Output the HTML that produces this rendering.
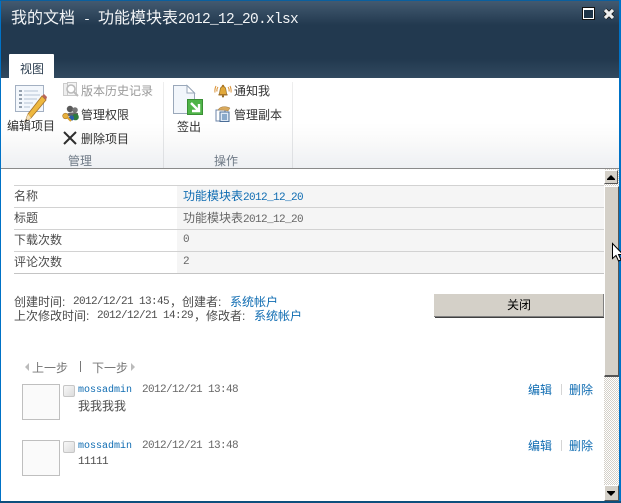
<!DOCTYPE html>
<html><head><meta charset="utf-8"><style>
html,body{margin:0;padding:0;width:621px;height:503px;overflow:hidden;background:#fff}
#p{position:relative;width:621px;height:503px;overflow:hidden;background:#fff;font-family:"Liberation Sans","WenQuanYi Zen Hei","Noto Sans CJK SC",sans-serif;font-size:12px;color:#4c4c4c}
.b{position:absolute}
.t{position:absolute;white-space:nowrap;line-height:14px;height:14px;margin-top:1px}
.m{font-family:"Liberation Mono",monospace;font-size:11px;letter-spacing:-.6px}
.l{color:#0f6cb2}
.r{color:#222}
.line{position:absolute;left:14px;width:590px;height:1px;background:#d2d2d2}
svg{position:absolute;overflow:visible}
</style></head><body><div id="p">
<div class="b" style="left:1px;top:1px;width:618px;height:77px;background:linear-gradient(#435a70 0,#22394f 24px,#22394f 58px,#31495f 77px)"></div>
<div class="t" style="left:11px;top:9px;color:#f2f4f6;font-size:16px;line-height:18px;height:18px">我的文档<span style="font-family:'Liberation Mono',monospace;font-size:13.33px"> - </span><span style="margin-left:-1px">功能模块表</span><span style="font-family:'Liberation Mono',monospace;font-size:14.5px;letter-spacing:-.7px">2012_12_20.xlsx</span></div>
<div class="b" style="left:583px;top:8px;width:9px;height:8px;border:1px solid #fff;background:#1c3347;outline:1px solid #111;outline-offset:0;border-top-width:2px"></div>
<svg style="left:604px;top:9px" width="10" height="10" viewBox="0 0 10 10"><path d="M1 1L9 9M9 1L1 9" stroke="#111" stroke-width="4.6"/><path d="M1 1L9 9M9 1L1 9" stroke="#eee" stroke-width="3.2"/></svg>
<div class="b" style="left:9px;top:54px;width:45px;height:25px;background:linear-gradient(#fff,#fff);border-radius:1px 1px 0 0"></div>
<div class="t" style="left:20px;top:61px;color:#2c3e50">视图</div>

<div class="b" style="left:1px;top:78px;width:618px;height:90px;background:linear-gradient(#fff 0,#fff 45px,#fafafa 62px,#eef0f3 90px)"></div>
<div class="b" style="left:163px;top:82px;width:1px;height:86px;background:linear-gradient(#eee,#dcdee1)"></div>
<div class="b" style="left:292px;top:82px;width:1px;height:86px;background:linear-gradient(#eee,#dcdee1)"></div>
<div class="b" style="left:1px;top:168px;width:618px;height:1px;background:#8a8a8a"></div>

<svg style="left:14px;top:84px" width="36" height="40" viewBox="0 0 36 40">
<rect x="1.500" y="1.500" width="28" height="26" fill="#f3f7fc" stroke="#a3b0c2"/>
<path d="M5 7h3M5 11h3M5 15h3M5 19h3M5 23h3" stroke="#5b6b80" stroke-width="1.200"/>
<path d="M10 7h14M10 11h16M10 15h13M10 19h9M10 23h6" stroke="#c2cddb" stroke-width="1.200"/>
<path d="M11 38l3-8L28 12l4 4L17 34z" fill="#eeb83f" stroke="#a5722a" stroke-width=".8"/>
<path d="M28 12l2-2 3 3-1 3z" fill="#b8665a"/>
<path d="M11 38l3-8 3 4z" fill="#f3dfb5"/>
<path d="M11 38l1.200-3 1.600 1.800z" fill="#333"/>
</svg>
<div class="t r" style="left:7px;top:118px;color:#333">编辑项目</div>

<svg style="left:62px;top:81px" width="18" height="18" viewBox="0 0 18 18"><rect x="1.500" y="2.500" width="9" height="12" fill="#eee" stroke="#ccc"/><rect x="5.500" y="1.500" width="9" height="13" fill="#f4f4f4" stroke="#c8c8c8"/><circle cx="9" cy="8" r="4" fill="#fff" stroke="#bbb" stroke-width="1.600"/><path d="M12 11l4 4" stroke="#bbb" stroke-width="2"/></svg>
<div class="t" style="left:81px;top:83px;color:#9a9a9a">版本历史记录</div>
<svg style="left:62px;top:105px" width="18" height="18" viewBox="0 0 18 18"><circle cx="8" cy="4" r="3.200" fill="#5a5a5a"/><circle cx="13" cy="5" r="2.800" fill="#777"/><path d="M4 11c0-4 8-4 12-3v3z" fill="#666"/><circle cx="13.500" cy="12" r="3.300" fill="#2f7b3d"/><circle cx="9.500" cy="13" r="2.600" fill="#2b5fa8"/><circle cx="3.500" cy="11" r="2.800" fill="#e8b13e" stroke="#a9792a" stroke-width=".6"/><path d="M5 12l4 4" stroke="#d99f2e" stroke-width="2"/></svg>
<div class="t r" style="left:81px;top:107px;color:#333">管理权限</div>
<svg style="left:63px;top:131px" width="14" height="14" viewBox="0 0 14 14"><path d="M1 1L13 13M13 1L1 13" stroke="#2e2e2e" stroke-width="2"/></svg>
<div class="t r" style="left:81px;top:131px;color:#333">删除项目</div>
<div class="t" style="left:68px;top:153px;color:#6f7a86">管理</div>

<svg style="left:172px;top:84px" width="34" height="40" viewBox="0 0 34 40">
<path d="M1.500 1.500H15L22.500 9V29.500H1.500z" fill="#f2f6fb" stroke="#9aa8ba"/>
<path d="M15 1.500V9H22.500z" fill="#fff" stroke="#9aa8ba"/>
<rect x="15.500" y="15.500" width="15" height="15" fill="#4fb448" stroke="#3a8f35"/>
<path d="M19 19l8 8M27 20v7h-7" stroke="#fff" stroke-width="2.400" fill="none"/>
</svg>
<div class="t r" style="left:177px;top:119px;color:#333">签出</div>
<svg style="left:215px;top:83px" width="16" height="15" viewBox="0 0 16 15"><path d="M4 11.500c1.500-2 0-8 4-8s2.500 6 4 8z" fill="#e2a93a" stroke="#8f6a25" stroke-width=".7"/><circle cx="8" cy="3" r="1.200" fill="#b07a28"/><rect x="3.500" y="11" width="9" height="1.500" fill="#a87428"/><circle cx="8" cy="13.400" r="1.100" fill="#8f6a25"/><path d="M3 4Q1.500 6 2 8.500M1 3Q-.5 6 0 9.500M13 4Q14.500 6 14 8.500M15 3Q16.500 6 16 9.500" fill="none" stroke="#d98f30"/></svg>
<div class="t r" style="left:234px;top:83px;color:#333">通知我</div>
<svg style="left:215px;top:106px" width="16" height="16" viewBox="0 0 16 16"><rect x="1" y="4" width="9" height="11" fill="#fff" stroke="#6c86a8"/><rect x="5" y="6" width="9" height="9.500" fill="#dfeaf6" stroke="#4a6c96"/><path d="M7 9h5M7 11h5M7 13h5" stroke="#356aa0"/><path d="M3 4c2-4 8-4 12-2l-2 3c-3-1-6-1-10-1z" fill="#d9a95c" stroke="#9c7a45" stroke-width=".5"/></svg>
<div class="t r" style="left:234px;top:107px;color:#333">管理副本</div>
<div class="t" style="left:214px;top:153px;color:#6f7a86">操作</div>

<div class="b" style="left:177px;top:185px;width:427px;height:88px;background:#f5f5f5"></div>
<div class="line" style="top:185px"></div><div class="line" style="top:207px"></div><div class="line" style="top:229px"></div><div class="line" style="top:251px"></div><div class="line" style="top:273px;background:#c4c4c4"></div>
<div class="t" style="left:14px;top:188px">名称</div>
<div class="t" style="left:14px;top:210px">标题</div>
<div class="t" style="left:14px;top:232px">下载次数</div>
<div class="t" style="left:14px;top:254px">评论次数</div>
<div class="t l" style="left:183px;top:188px">功能模块表<span class="m">2012_12_20</span></div>
<div class="t" style="left:183px;top:210px;color:#666">功能模块表<span class="m">2012_12_20</span></div>
<div class="t m" style="left:183px;top:232px;color:#666">0</div>
<div class="t m" style="left:183px;top:254px;color:#666">2</div>

<div class="t" style="left:14px;top:294px">创建时间:</div><div class="t m" style="left:73px;top:294px">2012/12/21 13:45</div><div class="t" style="left:170px;top:294px">，创建者:</div><div class="t l" style="left:230px;top:294px">系统帐户</div>
<div class="t" style="left:14px;top:308px">上次修改时间:</div><div class="t m" style="left:97px;top:308px">2012/12/21 14:29</div><div class="t" style="left:194px;top:308px">，修改者:</div><div class="t l" style="left:254px;top:308px">系统帐户</div>

<div class="b" style="left:434px;top:294px;width:169px;height:22px;background:#d4d0c8;border-right:1px solid #808080;border-bottom:1px solid #808080;box-shadow:1px 1px 0 #404040"></div>
<div class="t" style="left:507px;top:297px;color:#000">关闭</div>

<svg style="left:25px;top:363px" width="5" height="8"><path d="M4 0V8L0 4z" fill="#bbb"/></svg>
<div class="t" style="left:32px;top:360px;color:#777">上一步</div>
<div class="b" style="left:80px;top:361px;width:1px;height:11px;background:#777"></div>
<div class="t" style="left:92px;top:360px;color:#777">下一步</div>
<svg style="left:131px;top:363px" width="5" height="8"><path d="M0 0V8L4 4z" fill="#bbb"/></svg>

<div class="b" style="left:22px;top:384px;width:36px;height:34px;background:#fafafa;border:1px solid #bfbfbf"></div>
<div class="b" style="left:63px;top:385px;width:10px;height:10px;background:linear-gradient(135deg,#f8f8f8,#dcdcdc);border:1px solid #c6c6c6;border-radius:2px"></div>
<div class="t m l" style="left:78px;top:383px;font-size:10px;letter-spacing:0">mossadmin</div>
<div class="t m" style="left:142px;top:382px;color:#666">2012/12/21 13:48</div>
<div class="t" style="left:78px;top:398px">我我我我</div>
<div class="t l" style="left:528px;top:382px">编辑</div><div class="b" style="left:561px;top:384px;width:1px;height:11px;background:#d5d5d5"></div><div class="t l" style="left:569px;top:382px">删除</div>

<div class="b" style="left:22px;top:440px;width:36px;height:34px;background:#fafafa;border:1px solid #bfbfbf"></div>
<div class="b" style="left:63px;top:441px;width:10px;height:10px;background:linear-gradient(135deg,#f8f8f8,#dcdcdc);border:1px solid #c6c6c6;border-radius:2px"></div>
<div class="t m l" style="left:78px;top:439px;font-size:10px;letter-spacing:0">mossadmin</div>
<div class="t m" style="left:142px;top:438px;color:#666">2012/12/21 13:48</div>
<div class="t m" style="left:78px;top:454px">11111</div>
<div class="t l" style="left:528px;top:438px">编辑</div><div class="b" style="left:561px;top:440px;width:1px;height:11px;background:#d5d5d5"></div><div class="t l" style="left:569px;top:438px">删除</div>

<div class="b" style="left:604px;top:169px;width:15px;height:332px;background:repeating-conic-gradient(#d4d0c8 0 25%,#fff 0 50%) 0 0/2px 2px"></div>
<div class="b" style="left:604px;top:170px;width:14px;height:14px;background:#d4d0c8;border-right:1px solid #555;border-bottom:1px solid #555;border-top:1px solid #fff;border-left:1px solid #fff;box-sizing:border-box"></div>
<svg style="left:607px;top:175px" width="8" height="5"><path d="M4 0L8 4V5H0V4z" fill="#000"/></svg>
<div class="b" style="left:604px;top:186px;width:15px;height:191px;background:#d4d0c8;border-right:1px solid #555;border-bottom:2px solid #555;border-left:1px solid #fff;border-top:1px solid #fff;box-sizing:border-box"></div>
<div class="b" style="left:604px;top:485px;width:15px;height:16px;background:#d4d0c8;border-right:1px solid #555;border-bottom:1px solid #555;border-top:1px solid #fff;border-left:1px solid #fff;box-sizing:border-box"></div>
<svg style="left:607px;top:491px" width="8" height="5"><path d="M4 5L8 1V0H0V1z" fill="#000"/></svg>

<div class="b" style="left:0;top:0;width:1px;height:503px;background:#0072c6"></div>
<div class="b" style="left:0;top:0;width:621px;height:1px;background:#0a5f9e"></div>
<div class="b" style="left:619px;top:0;width:2px;height:503px;background:#0072c6"></div>
<div class="b" style="left:0;top:501px;width:621px;height:2px;background:#0d4f7d"></div>
<svg style="left:612px;top:243px" width="11" height="19" viewBox="0 0 11 19"><path d="M.5.5V15.500L4 12.500L6.500 18L9 17L6.500 11.500H11z" fill="#fff" stroke="#000"/></svg>
</div></body></html>
